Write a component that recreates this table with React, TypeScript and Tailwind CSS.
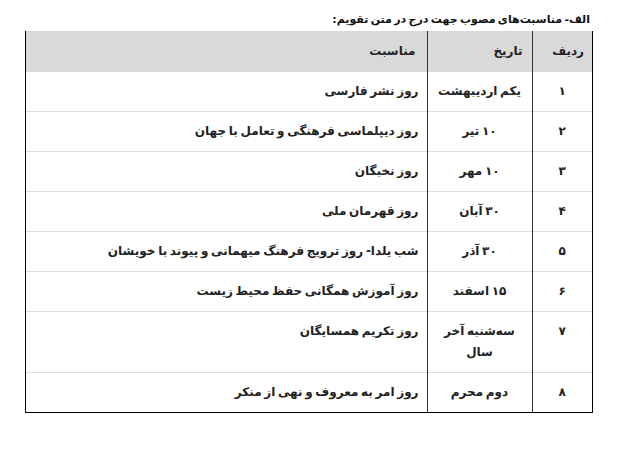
const rows = [
  { n: '۱', date: ['یکم اردیبهشت'], title: 'روز نشر فارسی' },
  { n: '۲', date: ['۱۰ تیر'], title: 'روز دیپلماسی فرهنگی و تعامل با جهان' },
  { n: '۳', date: ['۱۰ مهر'], title: 'روز نخبگان' },
  { n: '۴', date: ['۳۰ آبان'], title: 'روز قهرمان ملی' },
  { n: '۵', date: ['۳۰ آذر'], title: 'شب یلدا- روز ترویج فرهنگ میهمانی و پیوند با خویشان' },
  { n: '۶', date: ['۱۵ اسفند'], title: 'روز آموزش همگانی حفظ محیط زیست' },
  { n: '۷', date: ['سه‌شنبه آخر', 'سال'], title: 'روز تکریم همسایگان' },
  { n: '۸', date: ['دوم محرم'], title: 'روز امر به معروف و نهی از منکر' },
]

export default function App() {
  return (
    <div
      className="w-[631px] h-[456px] bg-white text-[#222] font-bold text-[12px] [word-spacing:-1.5px] pl-[25px] pt-[9px]"
      style={{ fontFamily: '"DejaVu Sans", sans-serif' }}
    >
      <div dir="rtl" className="w-[568px]">
        <div className="pr-[3px] text-[11px] leading-[22px] text-[#111]">
          الف- مناسبت‌های مصوب جهت درج در متن تقویم:
        </div>
        <div className="border-x border-b border-black">
          <table className="w-full table-fixed border-collapse">
            <thead>
              <tr className="bg-[#d9d9d9]">
                <th className="w-[60px] border-l border-[#333] py-[10px] pr-[8px] text-right leading-[21px] font-bold">
                  ردیف
                </th>
                <th className="w-[105px] border-l border-[#333] py-[10px] pr-[9px] text-right leading-[21px] font-bold">
                  تاریخ
                </th>
                <th className="py-[10px] pr-[11px] text-right leading-[21px] font-bold">
                  مناسبت
                </th>
              </tr>
            </thead>
            <tbody>
              {rows.map((r, i) => (
                <tr key={r.n} className={i > 0 ? 'border-t border-[#dcdcdc]' : ''}>
                  <td className="border-l border-[#333] py-[9px] text-center align-top leading-[21px]">
                    {r.n}
                  </td>
                  <td className="border-l border-[#333] py-[9px] px-[4px] text-center align-top leading-[21px]">
                    {r.date.map((d) => (
                      <div key={d}>{d}</div>
                    ))}
                  </td>
                  <td className="py-[9px] pr-[8px] text-right align-top leading-[21px]">
                    {r.title}
                  </td>
                </tr>
              ))}
            </tbody>
          </table>
        </div>
      </div>
    </div>
  )
}
